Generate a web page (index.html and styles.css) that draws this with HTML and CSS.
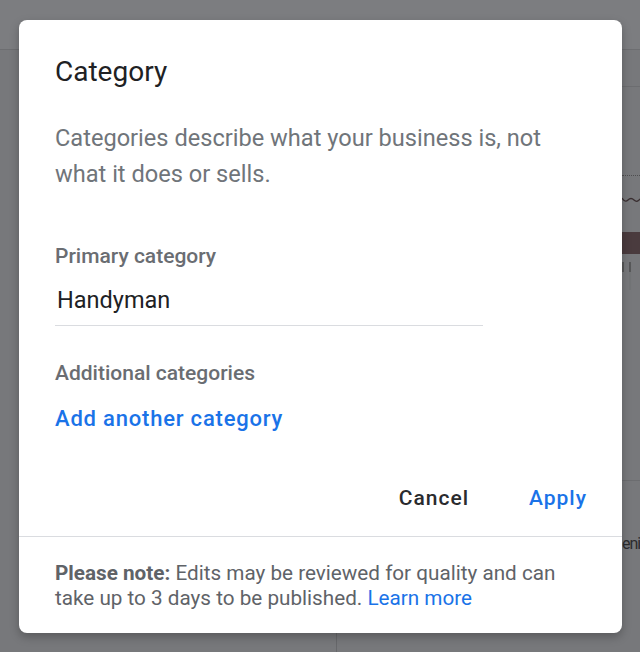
FILE: index.html
```html
<!DOCTYPE html>
<html lang="en">
<head>
<meta charset="utf-8">
<title>Category</title>
<link rel="stylesheet" href="styles.css">
</head>
<body>
<div class="backdrop">
  <div class="bd-header"></div>
  <div class="bd-body">
    <div class="bd-left"></div>
    <div class="bd-right">
      <div class="bd-side">
        <div class="bd-rule"></div>
        <div class="bd-dotted"></div>
        <svg class="bd-wave" width="18" height="8" viewBox="0 0 18 8"><path d="M0 2 Q3 7 6 4 T12 4 T18 3" fill="none" stroke="#3a2f31" stroke-width="1.3"/></svg>
        <div class="bd-block"></div>
        <svg class="bd-ticks" width="18" height="30" viewBox="0 0 18 30"><path d="M1 2V12M8 2V12" stroke="#4a4a4c" stroke-width="1.4"/><path d="M8 12V30" stroke="#6f7073" stroke-width="1"/></svg>
        <div class="bd-rule2"></div>
        <div class="bd-text">eni</div>
      </div>
    </div>
  </div>
</div>

<div class="dialog">
  <div class="dialog-main">
    <h1 class="title">Category</h1>
    <p class="desc">Categories describe what your business is, not what it does or sells.</p>
    <div class="label label-primary">Primary category</div>
    <div class="input">Handyman</div>
    <div class="label label-additional">Additional categories</div>
    <div class="add-link">Add another category</div>
    <div class="actions">
      <span class="btn btn-cancel">Cancel</span>
      <span class="btn btn-apply">Apply</span>
    </div>
  </div>
  <div class="dialog-footer">
    <b>Please note:</b> Edits may be reviewed for quality and can take up to 3 days to be published. <span class="learn">Learn more</span>
  </div>
</div>
</body>
</html>
```
FILE: styles.css
```css
html, body {
  margin: 0;
  padding: 0;
}
body {
  width: 640px;
  height: 652px;
  overflow: hidden;
  background: #77787b;
  font-family: Roboto, "Liberation Sans", Arial, sans-serif;
  position: relative;
}

/* backdrop page */
.backdrop {
  width: 640px;
  height: 652px;
}
.bd-header {
  height: 49px;
  background: #7c7d80;
  border-bottom: 1px solid #6d6e71;
}
.bd-body {
  display: flex;
  height: 602px;
}
.bd-left {
  width: 336px;
  border-right: 1px solid #67686b;
}
.bd-right {
  flex: 1;
  display: flex;
  justify-content: flex-end;
}
.bd-side {
  width: 18px;
  display: flex;
  flex-direction: column;
  overflow: hidden;
}
.bd-rule {
  margin-top: 36px;
  height: 1px;
  background: #6c6d70;
}
.bd-dotted {
  margin-top: 88px;
  border-top: 1px dotted #4e4e50;
}
.bd-wave {
  display: block;
  margin-top: 20px;
}
.bd-block {
  margin-top: 28px;
  height: 22px;
  background: #4a3b3e;
}
.bd-ticks {
  display: block;
  margin-top: 6px;
}
.bd-rule2 {
  margin-top: 190px;
  height: 1px;
  background: #6c6d70;
}
.bd-text {
  margin-top: 52px;
  font-size: 16px;
  line-height: 22px;
  letter-spacing: -1px;
  color: #2c2c2e;
  white-space: nowrap;
}

/* dialog */
.dialog {
  position: absolute;
  left: 19px;
  top: 20px;
  width: 603px;
  height: 613px;
  box-sizing: border-box;
  background: #fff;
  border-radius: 8px;
  box-shadow: 0 4px 10px rgba(0, 0, 0, 0.25);
  overflow: hidden;
}
.dialog-main {
  padding: 34px 36px 23px 36px;
}
.title {
  margin: 0;
  font-size: 28px;
  line-height: 36px;
  font-weight: 400;
  color: #202124;
}
.desc {
  margin: 30px 0 0 0;
  font-size: 23.6px;
  line-height: 36px;
  color: #70757a;
}
.label {
  font-size: 21px;
  line-height: 28px;
  font-weight: 500;
  color: #6a6d72;
}
.label-primary {
  margin-top: 50px;
}
.input {
  margin-top: 12px;
  width: 428px;
  box-sizing: border-box;
  padding: 0 2px 7px 2px;
  font-size: 23.5px;
  line-height: 36px;
  color: #202124;
  border-bottom: 1px solid #dadce0;
}
.label-additional {
  margin-top: 33px;
}
.add-link {
  margin-top: 17px;
  font-size: 22px;
  line-height: 30px;
  font-weight: 500;
  letter-spacing: 0.8px;
  color: #1a73e8;
}
.actions {
  margin-top: 49px;
  display: flex;
  justify-content: flex-end;
  gap: 60px;
  margin-right: -1px;
}
.btn {
  font-size: 21px;
  line-height: 30px;
  font-weight: 500;
  letter-spacing: 1px;
}
.btn-cancel {
  color: #2a2b2e;
  margin-left: -2px;
}
.btn-apply {
  color: #1a73e8;
}
.dialog-footer {
  border-top: 1px solid #dadce0;
  padding: 24px 36px 22px 36px;
  font-size: 20.7px;
  line-height: 25px;
  color: #5f6368;
}
.dialog-footer b {
  font-weight: 700;
}
.learn {
  color: #1a73e8;
}
```
